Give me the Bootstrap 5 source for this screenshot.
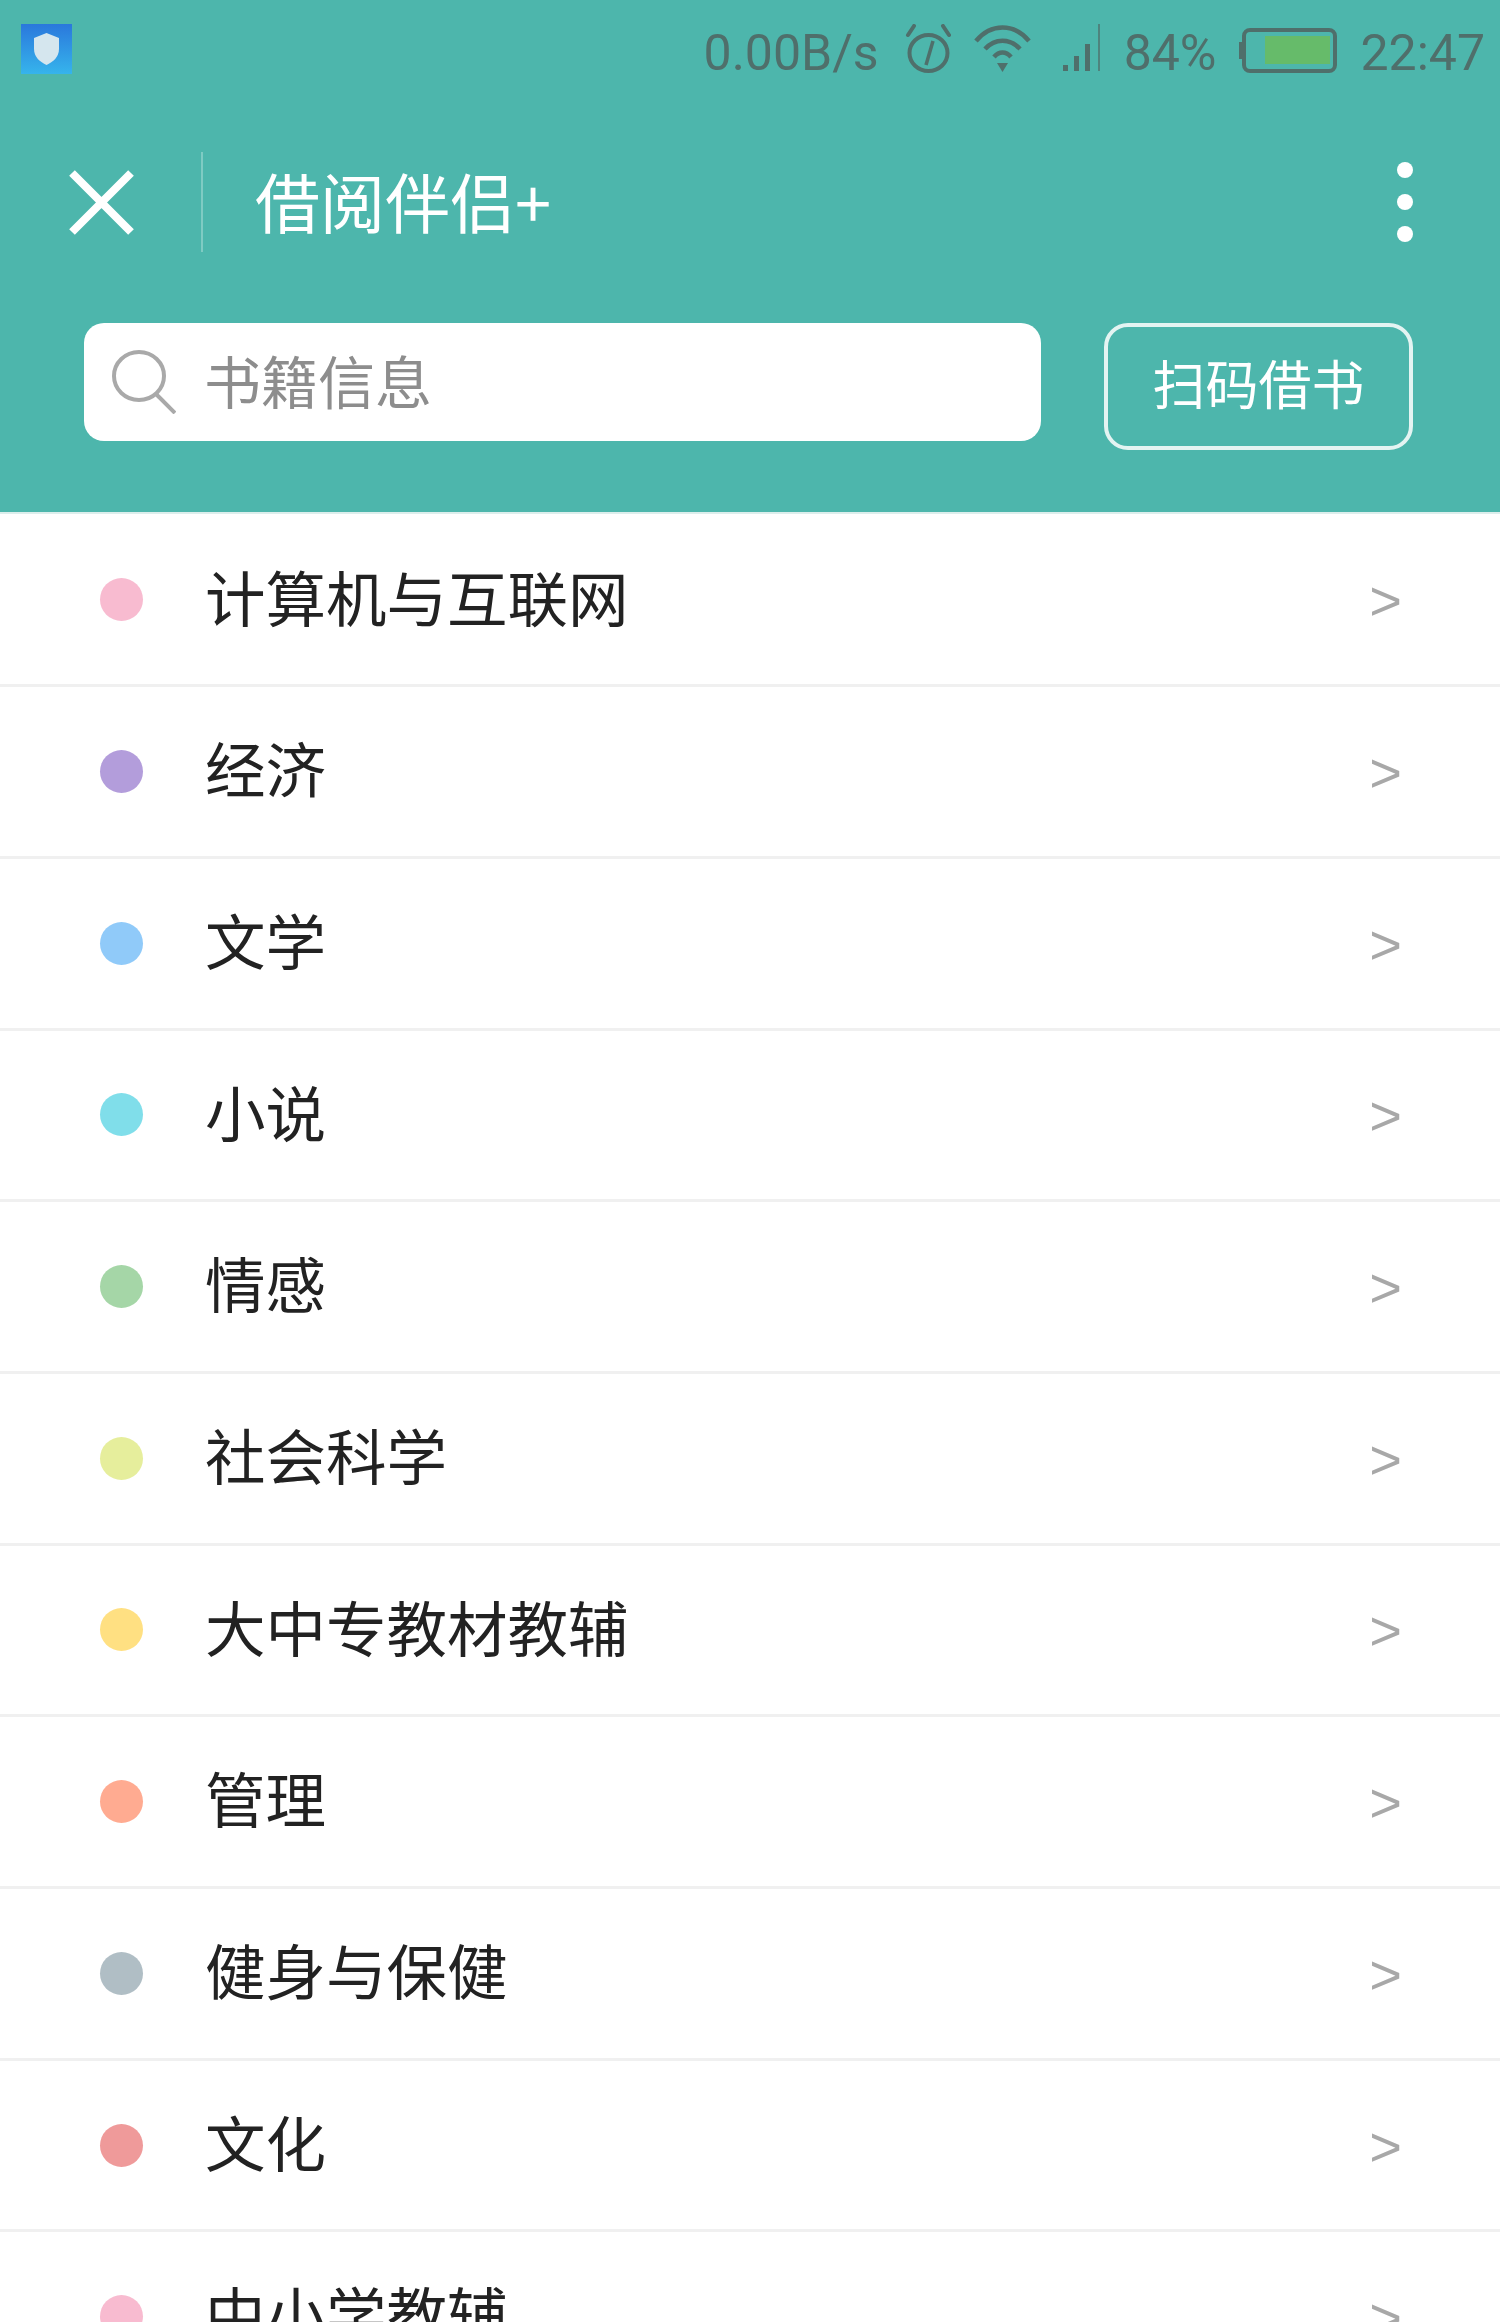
<!DOCTYPE html>
<html lang="zh-CN">

<head>
    <meta charset="UTF-8">
    <meta name="viewport" content="width=device-width, initial-scale=1.0">
    <title>借阅伴侣+</title>
    <link href="https://cdn.jsdelivr.net/npm/bootstrap@5.3.0/dist/css/bootstrap.min.css" rel="stylesheet">
    <style>
        html, body {
            height: 100%;
            overflow: hidden;
        }

        body {
            background-color: #fff;
            font-family: "Noto Sans CJK SC", "Liberation Sans", sans-serif;
        }

        .app-header {
            background-color: #4db6ac;
            height: 514px;
            border-bottom: 2px solid #dceeec;
        }

        .status-row {
            height: 100px;
            padding: 24px 15px 0 21px;
            color: #4f6f6b;
            font-family: Roboto, "Liberation Sans", sans-serif;
            font-size: 50px;
            line-height: 52px;
        }

        .status-items {
            gap: 23px;
        }

        .status-text {
            padding-top: 3px;
        }

        .title-row {
            height: 108px;
            margin-top: 48px;
            margin-bottom: 67px;
            padding-left: 69px;
            padding-right: 87px;
            color: #fff;
        }

        .title-sep {
            width: 2px;
            height: 100px;
            margin: 0 52px 0 67px;
            background-color: #7fcbc3;
        }

        .title-text {
            font-size: 65px;
            line-height: 1;
            margin-top: -3px;
        }

        .kebab-dot {
            display: block;
            width: 16px;
            height: 16px;
            border-radius: 50%;
            background-color: #fff;
        }

        .kebab-dots {
            gap: 16px;
        }

        .search-row {
            padding-left: 84px;
            padding-right: 87px;
        }

        .search-box {
            width: 957px;
            height: 118px;
            padding-left: 28px;
            background-color: #fff;
            border-radius: 20px;
            color: #8d8d8d;
            font-size: 57px;
            line-height: 1;
        }

        .search-box svg {
            margin-right: 28px;
        }

        .search-label {
            margin-top: -6px;
        }

        .scan-btn {
            width: 309px;
            height: 127px;
            padding: 0 0 8px;
            border: 4px solid #e4f4f2;
            border-radius: 24px;
            color: #fff;
            background: transparent;
            font-size: 53px;
            line-height: 1;
        }

        .cat-list {
            padding-top: 1.5px;
        }

        .cat-row {
            height: 171.7px;
            padding: 0 98px 0 100px;
            border-bottom: 3px solid #f0f0f0;
        }

        .cat-dot {
            width: 43px;
            height: 43px;
            margin-right: 62px;
            border-radius: 50%;
            flex: none;
        }

        .cat-name {
            color: #222;
            font-size: 60.5px;
            line-height: 1;
            margin-top: -8px;
        }

        .cat-arrow {
            color: #a8a8a8;
            font-family: "Liberation Sans", sans-serif;
            font-size: 56px;
            line-height: 1;
            margin-top: 3px;
        }
    </style>
</head>

<body>

    <!-- Status bar, toolbar and search -->
    <div class="app-header">
        <div class="status-row d-flex justify-content-between align-items-start">
            <svg width="51" height="50" viewBox="0 0 51 50">
                <defs>
                    <linearGradient id="shieldBg" x1="0" y1="0" x2="0" y2="1">
                        <stop offset="0" stop-color="#2a78dc" />
                        <stop offset="1" stop-color="#36b4ec" />
                    </linearGradient>
                </defs>
                <rect width="51" height="50" fill="url(#shieldBg)" />
                <path d="M25.5 9 L38 14 V25 C38 33 32 38 25.5 41 C19 38 13 33 13 25 V14 Z" fill="#d5e6ee" />
            </svg>
            <div class="status-items d-flex align-items-start">
                <span class="status-text">0.00B/s</span>
                <svg width="49" height="50" viewBox="3 0 49 50" fill="none" stroke="#4f6f6b" stroke-width="4">
                    <ellipse cx="29.5" cy="29" rx="19" ry="18" />
                    <path d="M34 17 L27 41" stroke-width="3.5" />
                    <path d="M9 11 L15 2 M50 11 L44 2" stroke-linecap="round" />
                </svg>
                <svg width="57" height="48" viewBox="0 0 57 48" fill="none" stroke="#4f6f6b" stroke-width="4.5">
                    <path d="M2 17 C17 -1 40 -1 55 17" />
                    <path d="M11 25 C21 14 36 14 46 25" />
                    <path d="M20 33 C25 27 32 27 37 33" />
                    <path d="M23 39 H34 L28.5 48 Z" fill="#4f6f6b" stroke="none" />
                </svg>
                <svg width="47" height="48" viewBox="0 0 47 48" fill="#4f6f6b">
                    <rect x="9" y="41" width="5" height="6" />
                    <rect x="20" y="32" width="5" height="15" />
                    <rect x="31" y="20" width="5" height="27" />
                    <rect x="44" y="0" width="2" height="47" opacity="0.7" />
                </svg>
                <span class="status-text">84%</span>
                <svg width="98" height="46" viewBox="0 0 98 46" class="mt-1">
                    <rect x="5" y="2" width="91" height="41" rx="6" fill="none" stroke="#4f6f6b" stroke-width="4" />
                    <rect x="0" y="14" width="4" height="17" fill="#4f6f6b" />
                    <rect x="26" y="8" width="65" height="28" fill="#66bb6a" />
                </svg>
                <span class="status-text">22:47</span>
            </div>
        </div>

        <div class="title-row d-flex align-items-center">
            <svg width="65" height="65" viewBox="0 0 65 65" stroke="#fff" stroke-width="8">
                <path d="M3 3 L62 62 M62 3 L3 62" />
            </svg>
            <div class="title-sep"></div>
            <div class="title-text flex-grow-1">借阅伴侣+</div>
            <div class="kebab-dots d-flex flex-column">
                <span class="kebab-dot"></span>
                <span class="kebab-dot"></span>
                <span class="kebab-dot"></span>
            </div>
        </div>

        <div class="search-row d-flex justify-content-between align-items-start">
            <div class="search-box d-flex align-items-center">
                <svg width="64" height="64" viewBox="0 0 64 64" fill="none" stroke="#a9a9a9" stroke-width="4">
                    <ellipse cx="27" cy="26" rx="25" ry="24" />
                    <path d="M44 44 L63 63" />
                </svg>
                <span class="search-label">书籍信息</span>
            </div>
            <button type="button" class="btn scan-btn">扫码借书</button>
        </div>
    </div>

    <!-- Categories -->
    <div id="catList" class="cat-list"></div>

    <script src="https://cdn.jsdelivr.net/npm/bootstrap@5.3.0/dist/js/bootstrap.bundle.min.js"></script>
    <script>
        const categories = [
            { name: '计算机与互联网', color: '#f8bbd0' },
            { name: '经济', color: '#b39ddb' },
            { name: '文学', color: '#90caf9' },
            { name: '小说', color: '#80deea' },
            { name: '情感', color: '#a5d6a7' },
            { name: '社会科学', color: '#e6ee9c' },
            { name: '大中专教材教辅', color: '#ffe082' },
            { name: '管理', color: '#ffab91' },
            { name: '健身与保健', color: '#b0bec5' },
            { name: '文化', color: '#ef9a9a' },
            { name: '中小学教辅', color: '#f8bbd0' }
        ];

        const list = document.getElementById('catList');
        categories.forEach(cat => {
            const row = document.createElement('div');
            row.className = 'cat-row d-flex align-items-center';
            row.innerHTML = `
                <span class="cat-dot" style="background-color: ${cat.color}"></span>
                <span class="cat-name flex-grow-1">${cat.name}</span>
                <span class="cat-arrow">&gt;</span>
            `;
            list.appendChild(row);
        });
    </script>

</body>

</html>
